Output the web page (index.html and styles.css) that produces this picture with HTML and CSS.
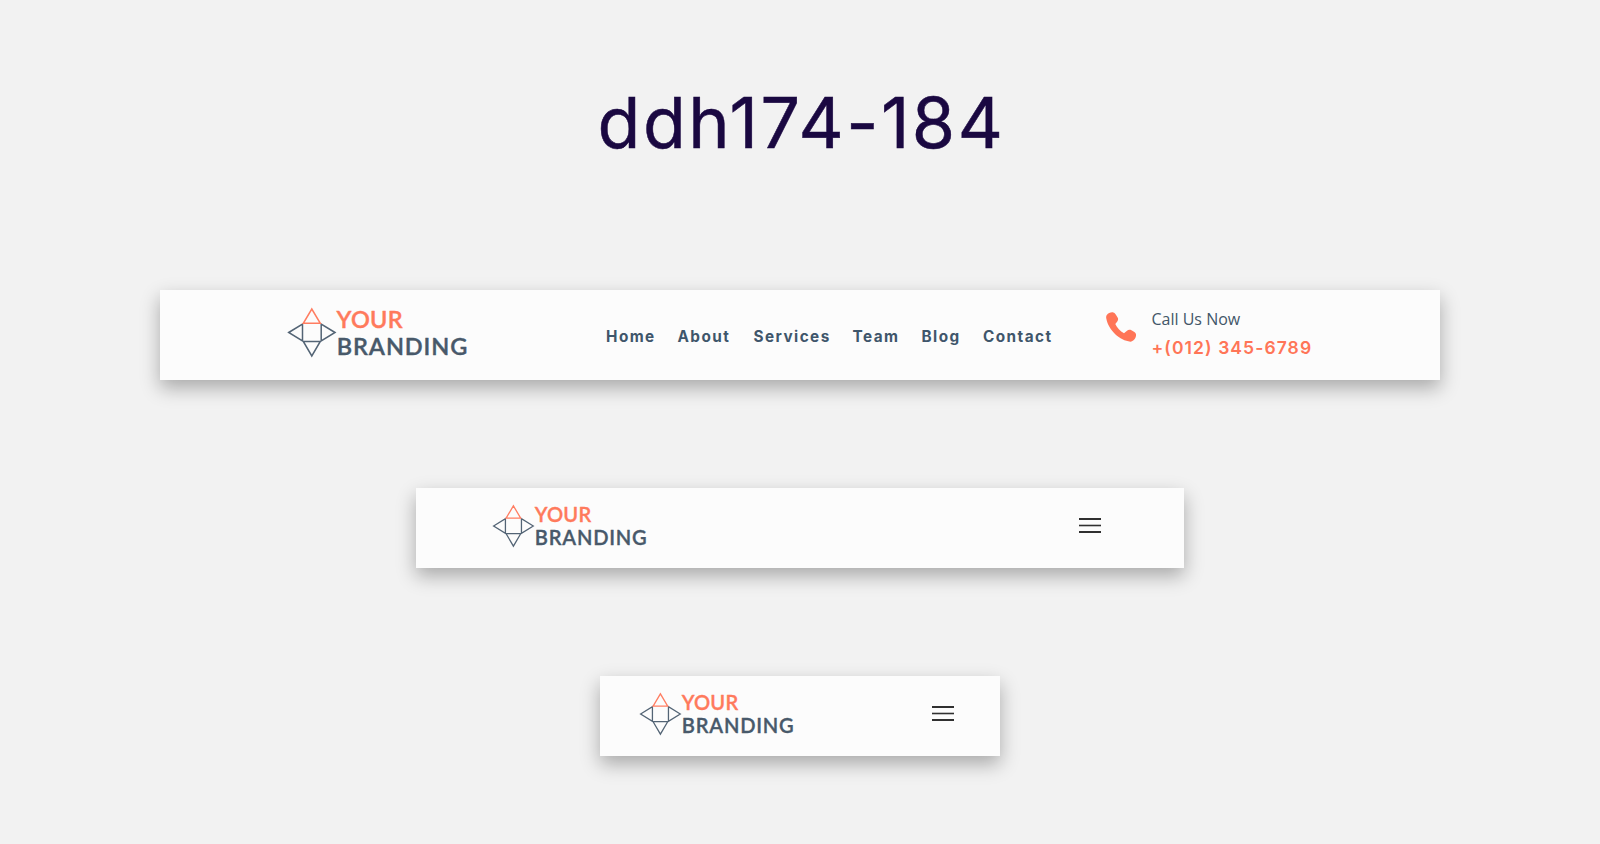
FILE: index.html
```html
<!DOCTYPE html>
<html lang="en">
<head>
<meta charset="utf-8">
<title>ddh174-184</title>
<link rel="stylesheet" href="styles.css">
</head>
<body>
<h1 class="title">ddh174-184</h1>
<header class="bar bar-desktop">
  <svg class="logo" viewBox="0 0 182 50">
    <g class="mark">
      <path d="M.7 24.500 14.500 16v17zM47 24.500 33.200 16v17zM15.300 33.500h17L23.800 48z"/>
      <path class="accent" d="M15.300 15.300h17L23.800 1z"/>
    </g>
    <text class="logo-text logo-top" x="48.600" y="20" textLength="66">YOUR</text>
    <text class="logo-text logo-bottom" x="48.800" y="46.500" textLength="130.500">BRANDING</text>
  </svg>
  <nav class="nav">
    <a>Home</a><a>About</a><a>Services</a><a>Team</a><a>Blog</a><a>Contact</a>
  </nav>
  <div class="call">
    <svg class="phone" viewBox="0 0 30 30"><path d="M.8 3C2.300.9 5 0 7.200.4c1.300.3 2 1.200 2.700 2.300l1.700 2.900c.9 1.500.5 3-.5 4.200L9.300 12c1.800 4 4.800 7.200 8.700 9.200l2.700-2.200c1.400-1.200 3.100-1.600 4.700-.7l3 1.800c1.300.8 1.900 2.200 1.600 3.700-.5 3.200-2.900 5.600-5.600 5.900C14 28.500 2.500 18.500.3 6.500 0 5.200.1 4 .8 3z"/></svg>
    <div class="call-copy">
      <div class="call-label">Call Us Now</div>
      <div class="call-number">+(012) 345-6789</div>
    </div>
  </div>
</header>
<header class="bar bar-tablet">
  <svg class="logo" viewBox="0 0 182 50">
    <g class="mark">
      <path d="M.7 24.500 14.500 16v17zM47 24.500 33.200 16v17zM15.300 33.500h17L23.800 48z"/>
      <path class="accent" d="M15.300 15.300h17L23.800 1z"/>
    </g>
    <text class="logo-text logo-top" x="48.600" y="20" textLength="66">YOUR</text>
    <text class="logo-text logo-bottom" x="48.800" y="46.500" textLength="130.500">BRANDING</text>
  </svg>
  <svg class="menu" viewBox="0 0 22 15"><path d="M0 1h22M0 14h22"/><path class="mid" d="M0 7.500h22"/></svg>
</header>
<header class="bar bar-phone">
  <svg class="logo" viewBox="0 0 182 50">
    <g class="mark">
      <path d="M.7 24.500 14.500 16v17zM47 24.500 33.200 16v17zM15.300 33.500h17L23.800 48z"/>
      <path class="accent" d="M15.300 15.300h17L23.800 1z"/>
    </g>
    <text class="logo-text logo-top" x="48.600" y="20" textLength="66">YOUR</text>
    <text class="logo-text logo-bottom" x="48.800" y="46.500" textLength="130.500">BRANDING</text>
  </svg>
  <svg class="menu" viewBox="0 0 22 15"><path d="M0 1h22M0 14h22"/><path class="mid" d="M0 7.500h22"/></svg>
</header>
</body>
</html>
```
FILE: styles.css
```css
* { box-sizing: border-box; }
body {
  margin: 0;
  height: 844px;
  overflow: hidden;
  background: #f2f2f2;
  display: flex;
  flex-direction: column;
  align-items: center;
}
.title {
  margin: 80px 0 0;
  padding-left: 3px;
  height: 210px;
  font: 400 70px/86px Inter, sans-serif;
  letter-spacing: 2.500px;
  color: #1a0841;
  -webkit-text-stroke: 0.500px #1a0841;
  white-space: nowrap;
  flex: none;
}
.bar {
  flex: none;
  display: flex;
  align-items: flex-start;
  background: #fcfcfc;
  box-shadow: 0 8px 18px rgba(0, 0, 0, 0.3);
}
.bar-desktop { width: 1280px; height: 90px; padding-left: 128px; }
.bar-tablet { width: 768px; height: 80px; margin-top: 108px; padding: 0 83px 0 77px; justify-content: space-between; }
.bar-phone { width: 400px; height: 80px; margin-top: 108px; padding: 0 46.500px 0 40px; justify-content: space-between; }
.logo { display: block; width: 182px; height: 50px; margin-top: 18px; overflow: visible; }
.bar-tablet .logo, .bar-phone .logo { width: 156px; height: 42.860px; margin-top: 17px; }
.mark { fill: none; stroke: #536475; stroke-width: 1.500; }
.accent { stroke: #ff7d61; }
.logo-text { font: 600 23.500px Lato, sans-serif; stroke-width: 0.400; stroke-linejoin: round; }
.logo-top { fill: #ff7a5c; stroke: #ff7a5c; }
.logo-bottom { fill: #48596a; stroke: #48596a; }
.nav {
  display: grid;
  grid-template-columns: 71.500px 76px 99px 69px 61.500px 73px;
  margin: 35px 0 0 136px;
  font: 700 15.300px/23px Inter, sans-serif;
  letter-spacing: 1.450px;
  color: #3f566b;
  white-space: nowrap;
}
.call { display: flex; margin: 18px 0 0 49.500px; }
.phone { width: 30px; height: 30px; margin-top: 4px; fill: #ff7557; }
.call-copy { margin-left: 16px; white-space: nowrap; }
.call-label { font: 400 16px/22px "Open Sans", sans-serif; color: #425668; }
.call-number { margin-top: 6px; font: 600 17.500px/24px Inter, sans-serif; letter-spacing: 1.080px; color: #ff7557; }
.menu { width: 22px; height: 15px; margin-top: 30px; fill: none; stroke: #303030; stroke-width: 2; }
.menu .mid { stroke-width: 1.600; }
```
